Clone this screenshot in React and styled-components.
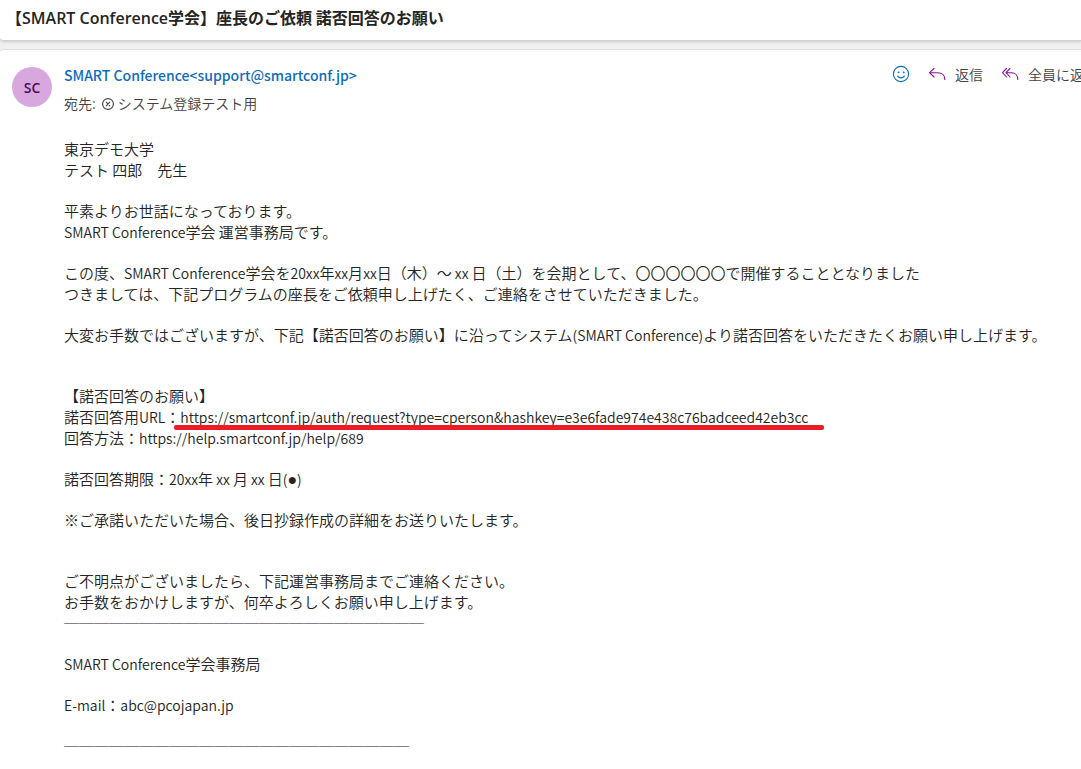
import React from "react";
import styled, { createGlobalStyle } from "styled-components";

const GlobalStyle = createGlobalStyle`
  * { box-sizing: border-box; }
  html, body { margin: 0; min-height: 100%; background: #ffffff; }
  body {
    font-family: "Noto Sans CJK JP", sans-serif;
    font-size: 15px;
    font-weight: 350;
    line-height: 21px;
    color: #242424;
    overflow-x: hidden;
  }
`;

const Page = styled.div`
  display: flex;
  flex-direction: column;
  gap: 8px;
  background: #f0f0f0;
`;

const SubjectBar = styled.header`
  padding: 5px 6px 11px;
  background: #ffffff;
  border-bottom: 1px solid #d1d1d1;
  border-radius: 0 0 0 4px;
  box-shadow: 0 1px 3px rgba(0, 0, 0, 0.16);
`;

const Subject = styled.h1`
  margin: 0;
  font-size: 16px;
  line-height: 24px;
  font-weight: 600;
  white-space: nowrap;
`;

const Latin = styled.span`
  font-size: 14px;
  line-height: 1;
`;

const SubjectLatin = styled.span`
  font-family: "Open Sans", sans-serif;
  line-height: 1;
`;

const Dot = styled.span`
  font-family: "DejaVu Sans", sans-serif;
  font-size: 16px;
  line-height: 1;
`;

const Message = styled.article`
  display: flex;
  gap: 12px;
  padding: 14px 0 12px 12px;
  background: #ffffff;
  border-top: 1px solid #e0e0e0;
  border-radius: 4px 0 0 0;
`;

const Avatar = styled.div`
  flex: none;
  display: flex;
  align-items: center;
  justify-content: center;
  width: 40px;
  height: 40px;
  margin-top: 3px;
  border-radius: 50%;
  background: #d9a7e0;
  color: #4c0d55;
  font-family: "Open Sans", sans-serif;
  font-size: 14px;
  font-weight: 600;
`;

const Content = styled.div`
  flex: 1;
  min-width: 0;
`;

const MessageHead = styled.div`
  display: flex;
  justify-content: space-between;
`;

const Sender = styled.div`
  font-size: 14px;
  line-height: 22px;
  font-weight: 500;
  color: #0f6cbd;
`;

const Recipient = styled.div`
  display: flex;
  align-items: center;
  gap: 4px;
  margin-top: 5px;
  font-size: 14px;
  line-height: 24px;
  color: #424242;

  svg { margin: 1px 0 0 2px; }
`;

const Actions = styled.div`
  flex: 0 0 189px;
  display: flex;
  align-items: center;
  gap: 18px;
  height: 19px;
  overflow: hidden;
`;

const Action = styled.button`
  flex: none;
  display: flex;
  align-items: center;
  gap: 9px;
  padding: 0;
  border: 0;
  background: none;
  color: #424242;
  font: inherit;
  font-size: 14px;
  line-height: 18px;
  white-space: nowrap;
`;

const Body = styled.div`
  display: flex;
  flex-direction: column;
  gap: 20px;
  margin-top: 23px;
`;

const Paragraph = styled.p`
  margin: ${({ $spaced }) => ($spaced ? "20px 0 0" : "0")};
`;

const Line = styled.span`
  display: block;
  height: 21px;
  white-space: nowrap;
`;

const Link = styled.a`
  position: relative;
  color: inherit;
  font-size: 14px;
  line-height: 1;
  text-decoration: none;
`;

const MarkedLink = styled(Link)`
  &::after {
    content: "";
    position: absolute;
    left: -6px;
    right: -16px;
    bottom: -3px;
    height: 5px;
    border-radius: 2px;
    background: #ed1c24;
  }
`;

const SmileIcon = () => (
  <svg width="18" height="18" viewBox="0 0 18 18" fill="none" stroke="#0f6cbd" strokeWidth="1.1" strokeLinecap="round">
    <circle cx="9" cy="9" r="7.6" />
    <circle cx="6.4" cy="7.3" r="0.5" fill="#0f6cbd" strokeWidth="0.8" />
    <circle cx="11.6" cy="7.3" r="0.5" fill="#0f6cbd" strokeWidth="0.8" />
    <path d="M5.6 11.2c1.7 2.2 5.1 2.2 6.8 0" />
  </svg>
);

const ReplyIcon = () => (
  <svg width="18" height="18" viewBox="0 0 18 18" fill="none" stroke="#881798" strokeWidth="1.1" strokeLinecap="round" strokeLinejoin="round">
    <path d="M6 3.5 1.5 7.7 6 12M1.5 7.7H10c4 0 6.8 2.6 6.8 6.8" />
  </svg>
);

const ReplyAllIcon = () => (
  <svg width="18" height="18" viewBox="0 0 18 18" fill="none" stroke="#881798" strokeWidth="1.1" strokeLinecap="round" strokeLinejoin="round">
    <path d="M5.5 3.5 1.5 7.7 5.5 12M9 3.5 5 7.7 9 12M5 7.7h5.5c3.6 0 6.3 2.6 6.3 6.8" />
  </svg>
);

const BlockedIcon = () => (
  <svg width="12" height="12" viewBox="0 0 12 12" fill="none" stroke="#424242" strokeWidth="1.1" strokeLinecap="round">
    <circle cx="6" cy="6" r="5.4" />
    <path d="M4.2 4.2l3.6 3.6M7.8 4.2 4.2 7.8" />
  </svg>
);

export default function App() {
  return (
    <>
      <GlobalStyle />
      <Page>
        <SubjectBar>
          <Subject>【<SubjectLatin>SMART Conference</SubjectLatin>学会】座長のご依頼 諾否回答のお願い</Subject>
        </SubjectBar>
        <Message>
          <Avatar>SC</Avatar>
          <Content>
            <MessageHead>
              <div>
                <Sender>SMART Conference&lt;support@smartconf.jp&gt;</Sender>
                <Recipient>
                  宛先: <BlockedIcon /> システム登録テスト用
                </Recipient>
              </div>
              <Actions>
                <Action aria-label="リアクション"><SmileIcon /></Action>
                <Action><ReplyIcon />返信</Action>
                <Action><ReplyAllIcon />全員に返信</Action>
              </Actions>
            </MessageHead>
            <Body>
              <Paragraph>
                <Line>東京デモ大学</Line>
                <Line>テスト 四郎　先生</Line>
              </Paragraph>
              <Paragraph>
                <Line>平素よりお世話になっております。</Line>
                <Line><Latin>SMART Conference</Latin>学会 運営事務局です。</Line>
              </Paragraph>
              <Paragraph>
                <Line>この度、<Latin>SMART Conference</Latin>学会を<Latin>20xx</Latin>年<Latin>xx</Latin>月<Latin>xx</Latin>日（木）～<Latin> xx </Latin>日（土）を会期として、〇〇〇〇〇〇で開催することとなりました</Line>
                <Line>つきましては、下記プログラムの座長をご依頼申し上げたく、ご連絡をさせていただきました。</Line>
              </Paragraph>
              <Paragraph>
                <Line>大変お手数ではございますが、下記【諾否回答のお願い】に沿ってシステム<Latin>(SMART Conference)</Latin>より諾否回答をいただきたくお願い申し上げます。</Line>
              </Paragraph>
              <Paragraph $spaced>
                <Line>【諾否回答のお願い】</Line>
                <Line>
                  諾否回答用<Latin>URL</Latin>：
                  <MarkedLink href="https://smartconf.jp/auth/request?type=cperson&hashkey=e3e6fade974e438c76badceed42eb3cc">
                    https://smartconf.jp/auth/request?type=cperson&amp;hashkey=e3e6fade974e438c76badceed42eb3cc
                  </MarkedLink>
                </Line>
                <Line>
                  回答方法：<Link href="https://help.smartconf.jp/help/689">https://help.smartconf.jp/help/689</Link>
                </Line>
              </Paragraph>
              <Paragraph>
                <Line>諾否回答期限：<Latin>20xx</Latin>年<Latin> xx </Latin>月<Latin> xx </Latin>日<Latin>(<Dot>●</Dot>)</Latin></Line>
              </Paragraph>
              <Paragraph>
                <Line>※ご承諾いただいた場合、後日抄録作成の詳細をお送りいたします。</Line>
              </Paragraph>
              <Paragraph $spaced>
                <Line>ご不明点がございましたら、下記運営事務局までご連絡ください。</Line>
                <Line>お手数をおかけしますが、何卒よろしくお願い申し上げます。</Line>
                <Line>────────────────────────</Line>
              </Paragraph>
              <Paragraph>
                <Line><Latin>SMART Conference</Latin>学会事務局</Line>
              </Paragraph>
              <Paragraph>
                <Line><Latin>E-mail</Latin>：<Link href="mailto:abc@pcojapan.jp">abc@pcojapan.jp</Link></Line>
              </Paragraph>
              <Paragraph>
                <Line>───────────────────────</Line>
              </Paragraph>
            </Body>
          </Content>
        </Message>
      </Page>
    </>
  );
}
